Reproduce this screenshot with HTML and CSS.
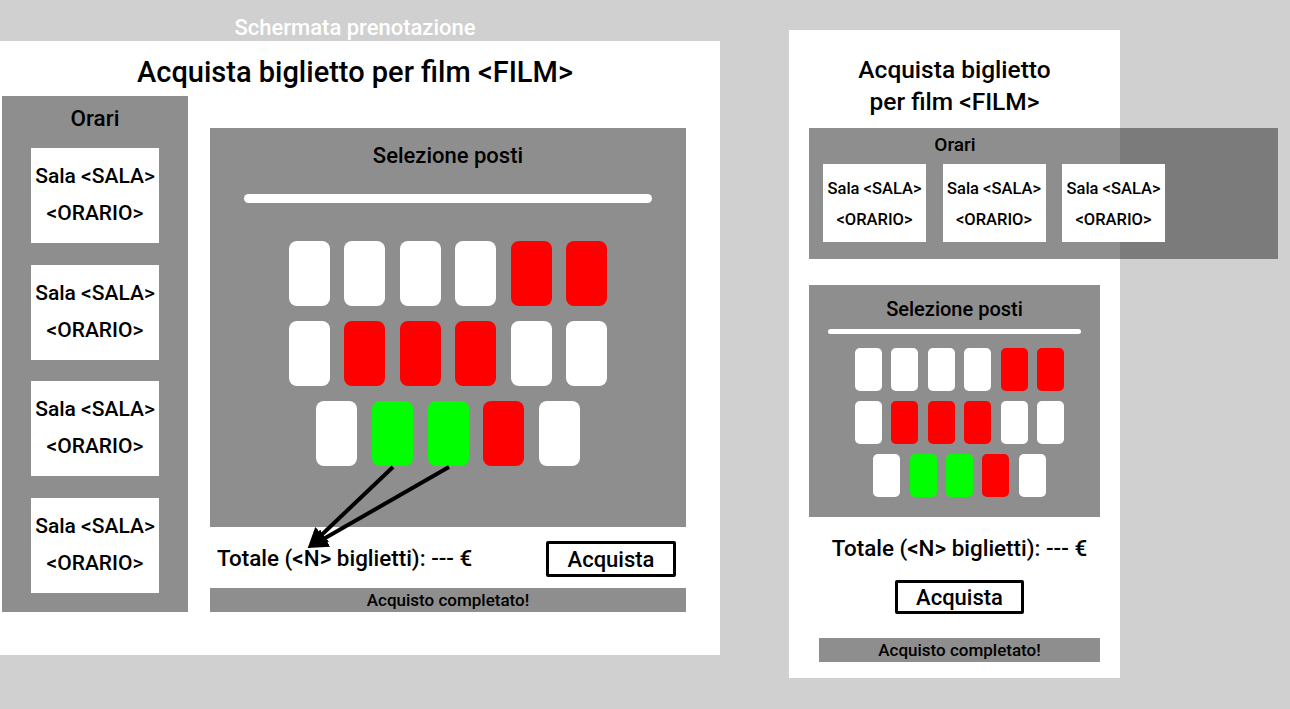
FILE: index.html
```html
<!DOCTYPE html>
<html lang="it">
<head>
  <meta charset="UTF-8" />
  <meta name="viewport" content="width=device-width, initial-scale=1.0"/>
  <title>Schermata prenotazione</title>
  <link rel="stylesheet" href="styles.css">
</head>
<body>

  <div class="board">

    <!-- desktop -->
    <div class="desk-col">
      <div class="label">Schermata prenotazione</div>

      <div class="screen desk">
        <h1>Acquista biglietto per film &lt;FILM&gt;</h1>

        <div class="desk-body">
          <div class="orari-col">
            <h2>Orari</h2>
            <div class="sala">Sala &lt;SALA&gt;<br>&lt;ORARIO&gt;</div>
            <div class="sala">Sala &lt;SALA&gt;<br>&lt;ORARIO&gt;</div>
            <div class="sala">Sala &lt;SALA&gt;<br>&lt;ORARIO&gt;</div>
            <div class="sala">Sala &lt;SALA&gt;<br>&lt;ORARIO&gt;</div>
          </div>

          <div class="main">
            <div class="posti">
              <h2>Selezione posti</h2>
              <div class="schermo"></div>
              <div class="rows">
                <div class="row">
                  <span class="seat"></span><span class="seat"></span><span class="seat"></span>
                  <span class="seat"></span><span class="seat taken"></span><span class="seat taken"></span>
                </div>
                <div class="row">
                  <span class="seat"></span><span class="seat taken"></span><span class="seat taken"></span>
                  <span class="seat taken"></span><span class="seat"></span><span class="seat"></span>
                </div>
                <div class="row">
                  <span class="seat"></span><span class="seat picked"></span><span class="seat picked"></span>
                  <span class="seat taken"></span><span class="seat"></span>
                </div>
              </div>
            </div>

            <div class="checkout">
              <span class="totale">Totale (&lt;N&gt; biglietti): --- €</span>
              <button>Acquista</button>
            </div>
            <div class="done">Acquisto completato!</div>
          </div>
        </div>

        <svg class="arrows" width="720" height="614" viewBox="0 0 720 614">
          <defs>
            <marker id="head" markerWidth="5" markerHeight="5" refX="3.5" refY="2.5" orient="auto" markerUnits="strokeWidth">
              <path d="M0,0 L5,2.5 L0,5 Z" fill="#000"/>
            </marker>
          </defs>
          <line x1="393" y1="426" x2="312" y2="503" stroke="#000" stroke-width="4" marker-end="url(#head)"/>
          <line x1="449" y1="426" x2="313" y2="504" stroke="#000" stroke-width="4" marker-end="url(#head)"/>
        </svg>
      </div>
    </div>

    <!-- mobile -->
    <div class="screen mobile">
      <h1>Acquista biglietto<br>per film &lt;FILM&gt;</h1>

      <div class="orari-strip">
        <h2>Orari</h2>
        <div class="strip-cards">
          <div class="sala">Sala &lt;SALA&gt;<br>&lt;ORARIO&gt;</div>
          <div class="sala">Sala &lt;SALA&gt;<br>&lt;ORARIO&gt;</div>
          <div class="sala">Sala &lt;SALA&gt;<br>&lt;ORARIO&gt;</div>
        </div>
      </div>

      <div class="posti">
        <h2>Selezione posti</h2>
        <div class="schermo"></div>
        <div class="rows">
          <div class="row">
            <span class="seat"></span><span class="seat"></span><span class="seat"></span>
            <span class="seat"></span><span class="seat taken"></span><span class="seat taken"></span>
          </div>
          <div class="row">
            <span class="seat"></span><span class="seat taken"></span><span class="seat taken"></span>
            <span class="seat taken"></span><span class="seat"></span><span class="seat"></span>
          </div>
          <div class="row">
            <span class="seat"></span><span class="seat picked"></span><span class="seat picked"></span>
            <span class="seat taken"></span><span class="seat"></span>
          </div>
        </div>
      </div>

      <div class="checkout">
        <span class="totale">Totale (&lt;N&gt; biglietti): --- €</span>
        <button>Acquista</button>
        <div class="done">Acquisto completato!</div>
      </div>
    </div>

  </div>

</body>
</html>
```

FILE: styles.css
```css
body {
  margin: 0;
  background: #d0d0d0;
  font-family: Roboto, "Noto Sans", sans-serif;
  font-weight: 500;
  color: #000;
}
h1, h2 {
  margin: 0;
  font-weight: 500;
  text-align: center;
}
.board {
  display: flex;
  align-items: flex-start;
  width: 1290px;
  height: 709px;
  overflow: hidden;
}

/* desktop */
.desk-col {
  width: 720px;
}
.label {
  height: 41px;
  width: 710px;
  color: #fff;
  font-size: 22px;
  line-height: 56px;
  text-align: center;
  overflow: hidden;
}
.screen {
  background: #fff;
  position: relative;
}
.desk {
  height: 614px;
}
.desk h1 {
  width: 710px;
  font-size: 29px;
  line-height: 32px;
  padding-top: 15px;
  height: 40px;
}
.desk-body {
  display: flex;
  padding-left: 2px;
}
.orari-col {
  width: 186px;
  height: 516px;
  background: #8e8e8e;
  display: flex;
  flex-direction: column;
  align-items: center;
  gap: 21.7px;
  box-sizing: border-box;
}
.orari-col h2 {
  font-size: 22.5px;
  line-height: 30px;
  margin-top: 7px;
  margin-bottom: -6.7px;
}
.sala {
  background: #fff;
  text-align: center;
}
.orari-col .sala {
  width: 128px;
  height: 95px;
  font-size: 21px;
  line-height: 37px;
  padding-top: 10px;
  box-sizing: border-box;
}
.main {
  margin-left: 22px;
  margin-top: 32px;
  width: 476px;
}
.posti {
  background: #8e8e8e;
  box-sizing: border-box;
}
.desk .posti {
  height: 399px;
  padding-top: 13px;
}
.desk .posti h2 {
  font-size: 22px;
  line-height: 30px;
}
.schermo {
  background: #fff;
  border-radius: 5px;
}
.desk .schermo {
  height: 9px;
  margin: 23px 34px 0 34px;
}
.rows {
  display: flex;
  flex-direction: column;
  align-items: center;
}
.row {
  display: flex;
}
.seat {
  background: #fff;
}
.seat.taken {
  background: #ff0000;
}
.seat.picked {
  background: #00ff00;
}
.desk .rows {
  gap: 15px;
  margin-top: 38px;
}
.desk .row {
  gap: 14.6px;
}
.desk .seat {
  width: 41px;
  height: 65px;
  border-radius: 8px;
}
.desk .checkout {
  display: flex;
  align-items: center;
  justify-content: space-between;
  height: 61px;
  padding: 0 10px 0 7px;
}
.totale {
  font-size: 22.4px;
}
button {
  font-family: inherit;
  font-weight: 500;
  background: #fff;
  color: #000;
  border: 3px solid #000;
  border-radius: 2px;
  font-size: 22px;
  padding: 0;
}
.desk button {
  width: 130px;
  height: 36px;
  margin-top: 3px;
}
.done {
  background: #8e8e8e;
  text-align: center;
  font-size: 17px;
  height: 24px;
  line-height: 24px;
}
.arrows {
  position: absolute;
  left: 0;
  top: 0;
  pointer-events: none;
}

/* mobile */
.mobile {
  width: 331px;
  height: 648px;
  margin-top: 30px;
  margin-left: 69px;
}
.mobile h1 {
  font-size: 24.5px;
  line-height: 32px;
  padding-top: 24px;
  height: 74px;
}
.orari-strip {
  width: 469px;
  height: 131px;
  margin-left: 20px;
  background: linear-gradient(to right, #8e8e8e 311px, #7b7b7b 311px);
}
.orari-strip h2 {
  width: 292px;
  font-size: 19px;
  line-height: 34px;
}
.strip-cards {
  display: flex;
  gap: 16.5px;
  padding-left: 14px;
  margin-top: 2px;
}
.strip-cards .sala {
  width: 103px;
  height: 78px;
  font-size: 16.5px;
  line-height: 31px;
  padding-top: 9px;
  box-sizing: border-box;
}
.mobile .posti {
  width: 291px;
  height: 232px;
  margin: 26px 0 0 20px;
  padding-top: 10px;
}
.mobile .posti h2 {
  font-size: 20px;
  line-height: 28px;
}
.mobile .schermo {
  height: 5px;
  margin: 6px 19px 0 19px;
}
.mobile .rows {
  gap: 10px;
  margin-top: 14px;
  padding-left: 10px;
}
.mobile .row {
  gap: 9.4px;
}
.mobile .seat {
  width: 27px;
  height: 43px;
  border-radius: 5px;
}
.mobile .checkout {
  width: 281px;
  margin-left: 30px;
  display: flex;
  flex-direction: column;
  align-items: center;
}
.mobile .totale {
  margin-top: 16px;
  line-height: 30px;
}
.mobile button {
  width: 129px;
  height: 34px;
  margin-top: 17px;
}
.mobile .done {
  width: 281px;
  margin-top: 24px;
}
```
